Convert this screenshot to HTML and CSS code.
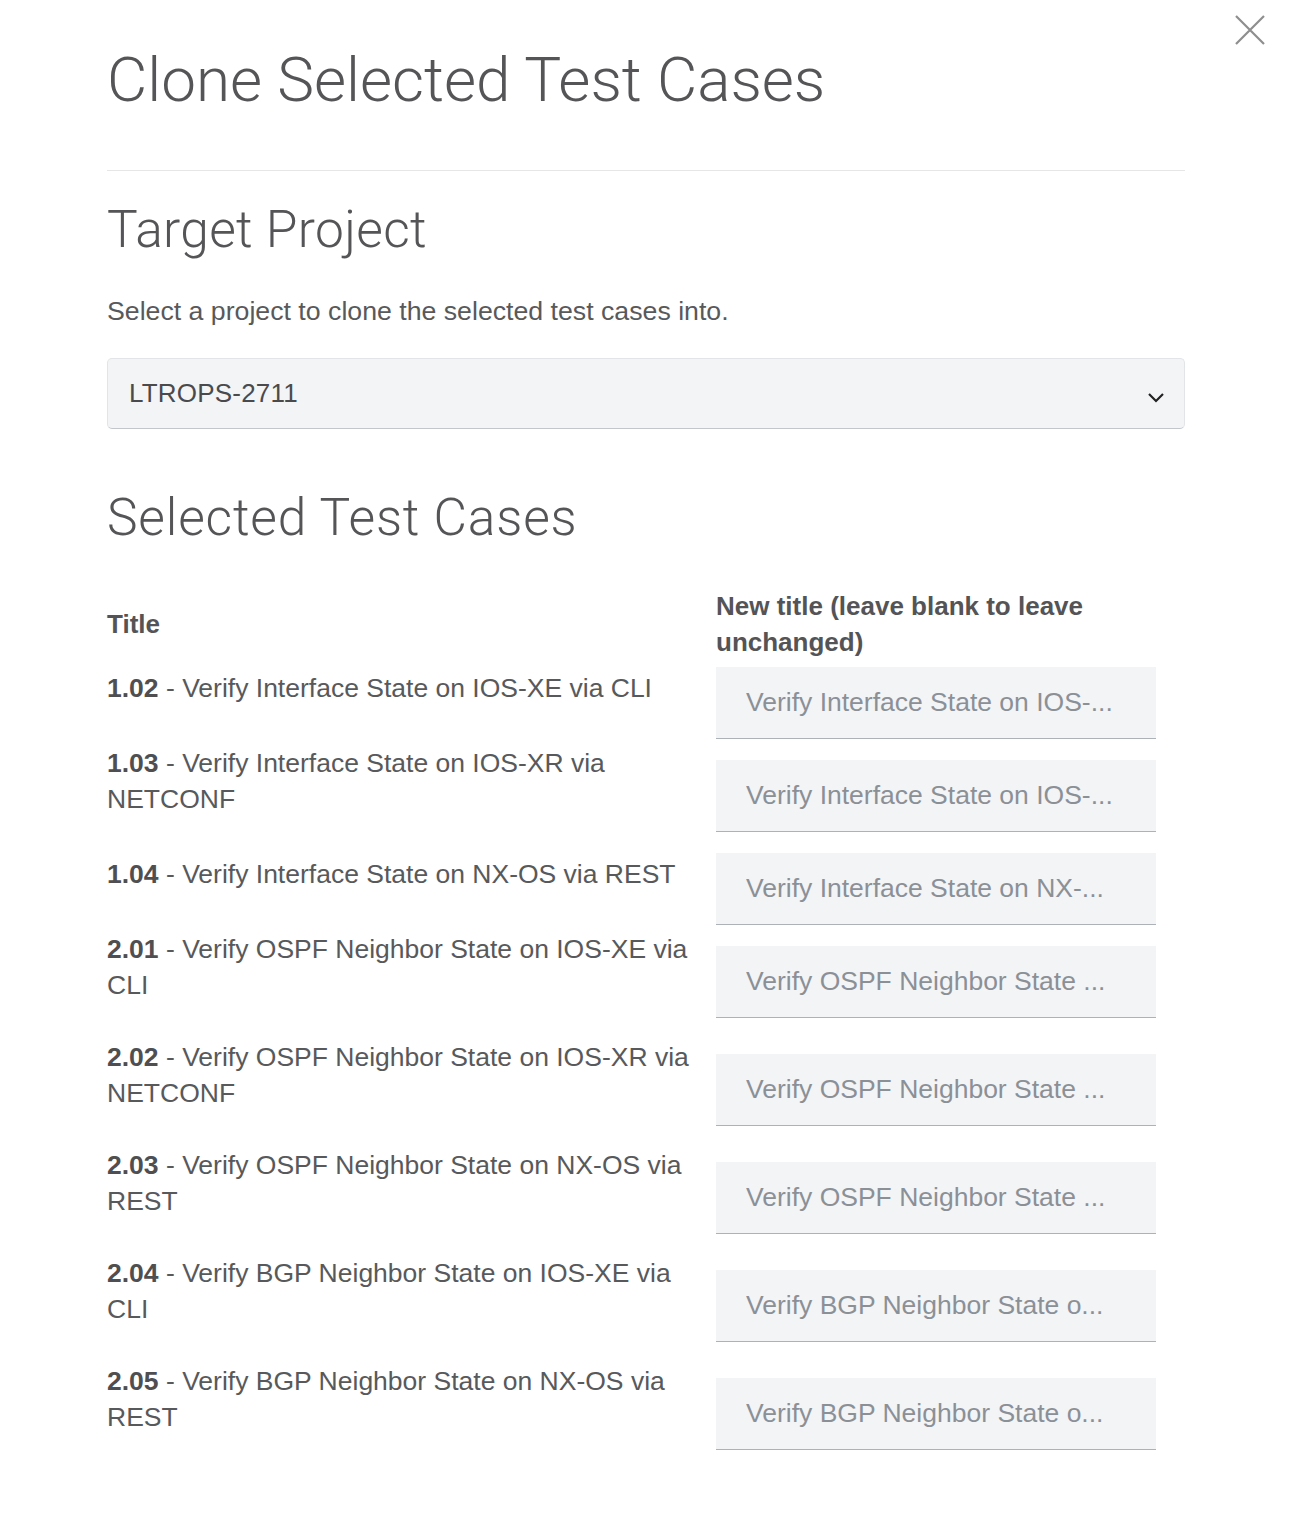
FILE: index.html
```html
<!DOCTYPE html>
<html>
<head>
<meta charset="utf-8">
<link rel="stylesheet" href="styles.css">
</head>
<body>
<div class="modal">
  <button class="close" aria-label="Close">
    <svg width="30" height="30" viewBox="0 0 30 30"><path d="M1 1 L29 29 M29 1 L1 29" stroke="#8e8e8e" stroke-width="2.2" fill="none"/></svg>
  </button>
  <h1 class="title">Clone Selected Test Cases</h1>
  <hr class="rule">
  <h2 class="section">Target Project</h2>
  <p class="lead">Select a project to clone the selected test cases into.</p>
  <div class="select">
    <span>LTROPS-2711</span>
    <svg class="chev" width="18" height="12" viewBox="0 0 18 12"><path d="M2 2 L9 9 L16 2" stroke="#222" stroke-width="2.2" fill="none"/></svg>
  </div>
  <h2 class="section section-2">Selected Test Cases</h2>
  <div class="cases">
    <div class="head">Title</div>
    <div class="head">New title (leave blank to leave unchanged)</div>

    <p class="case"><b>1.02</b> - Verify Interface State on IOS-XE via CLI</p>
    <input class="field" placeholder="Verify Interface State on IOS-...">

    <p class="case"><b>1.03</b> - Verify Interface State on IOS-XR via NETCONF</p>
    <input class="field" placeholder="Verify Interface State on IOS-...">

    <p class="case"><b>1.04</b> - Verify Interface State on NX-OS via REST</p>
    <input class="field" placeholder="Verify Interface State on NX-...">

    <p class="case"><b>2.01</b> - Verify OSPF Neighbor State on IOS-XE via CLI</p>
    <input class="field" placeholder="Verify OSPF Neighbor State ...">

    <p class="case"><b>2.02</b> - Verify OSPF Neighbor State on IOS-XR via NETCONF</p>
    <input class="field" placeholder="Verify OSPF Neighbor State ...">

    <p class="case"><b>2.03</b> - Verify OSPF Neighbor State on NX-OS via REST</p>
    <input class="field" placeholder="Verify OSPF Neighbor State ...">

    <p class="case"><b>2.04</b> - Verify BGP Neighbor State on IOS-XE via CLI</p>
    <input class="field" placeholder="Verify BGP Neighbor State o...">

    <p class="case"><b>2.05</b> - Verify BGP Neighbor State on NX-OS via REST</p>
    <input class="field" placeholder="Verify BGP Neighbor State o...">
  </div>
</div>
</body>
</html>
```
FILE: styles.css
```css
html, body {
  margin: 0;
  padding: 0;
  background: #ffffff;
}
body {
  font-family: "Liberation Sans", Arial, sans-serif;
  color: #58595b;
}
.modal {
  position: relative;
  width: 1078px;
  padding: 43px 0 40px 107px;
}
.close {
  position: absolute;
  top: 15px;
  left: 1235px;
  width: 30px;
  height: 30px;
  padding: 0;
  border: 0;
  background: none;
}
.close svg { display: block; }
.title {
  margin: 0;
  font-family: Roboto, "Liberation Sans", sans-serif;
  font-weight: 300;
  font-size: 62px;
  line-height: 74px;
  color: #555558;
}
.rule {
  margin: 53px 0 0;
  border: 0;
  border-top: 1px solid #e6e6e6;
  height: 0;
}
.section {
  margin: 29px 0 0;
  font-family: Roboto, "Liberation Sans", sans-serif;
  font-weight: 300;
  font-size: 51.5px;
  line-height: 60px;
  color: #555558;
  letter-spacing: 0.3px;
}
.section-2 { margin-top: 59px; letter-spacing: 0.8px; }
.lead {
  margin: 33px 0 0;
  font-size: 26.7px;
  line-height: 36px;
}
.select {
  margin-top: 29px;
  box-sizing: border-box;
  height: 71px;
  background: #f3f4f6;
  border: 1px solid #e2e4e7;
  border-bottom-color: #c3c7cc;
  border-radius: 5px;
  display: flex;
  align-items: center;
  justify-content: space-between;
  padding: 0 19px 0 21px;
  font-size: 26px;
  color: #4a4a4d;
  letter-spacing: 0.2px;
}
.chev { display: block; margin-top: 8px; }
.cases {
  margin-top: 40px;
  display: grid;
  grid-template-columns: 609px 440px;
  align-items: center;
  row-gap: 6px;
}
.head {
  font-weight: bold;
  font-size: 26px;
  line-height: 36px;
  color: #545457;
  margin-bottom: 1px;
}
.case {
  margin: 0 0 30px;
  padding-right: 14px;
  font-size: 26.5px;
  line-height: 36px;
}
.case b { color: #4f4f52; }
.field {
  box-sizing: border-box;
  width: 440px;
  height: 72px;
  margin: 0;
  padding: 0 0 0 30px;
  background: #f3f4f6;
  border: 0;
  border-bottom: 1px solid #adb2b8;
  border-radius: 0;
  font-family: "Liberation Sans", Arial, sans-serif;
  font-size: 26.5px;
  color: #58595b;
  outline: none;
}
.field::placeholder { color: #8b9097; opacity: 1; }
```
